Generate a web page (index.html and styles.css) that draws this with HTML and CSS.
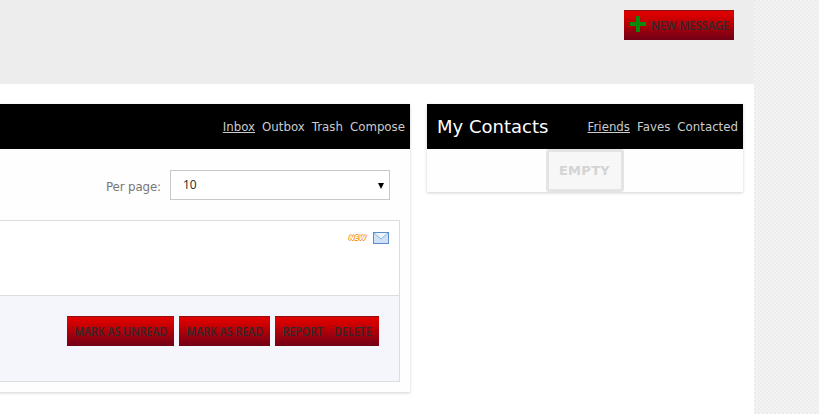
FILE: index.html
```html
<!DOCTYPE html>
<html lang="en">
<head>
  <meta charset="UTF-8" />
  <meta name="viewport" content="width=device-width, initial-scale=1.0" />
  <title>Messages</title>
  <link rel="stylesheet" href="styles.css">
</head>
<body>
  <div class="wrapper">
    <div class="topbar">
      <a class="red-btn new-msg" href="#">
        <svg class="plus" width="16" height="16" viewBox="0 0 16 16"><path d="M6 0h4v6h6v4h-6v6H6v-6H0V6h6z" fill="#0a8a0a"/></svg>
        <span class="lbl">NEW MESSAGE</span>
      </a>
    </div>
    <div class="content">
      <div class="panel messages">
        <div class="panel-head">
          <div class="tabs">
            <a class="active" href="#">Inbox</a>
            <a href="#">Outbox</a>
            <a href="#">Trash</a>
            <a href="#">Compose</a>
          </div>
        </div>
        <div class="panel-body">
          <div class="per-page">
            <label for="perpage">Per page:</label>
            <div class="select-wrap">
              <select id="perpage"><option>10</option><option>20</option></select>
            </div>
          </div>
          <div class="msg-box">
            <div class="msg-top">
              <span class="new-badge">NEW</span>
              <svg class="envelope" width="16" height="12" viewBox="0 0 16 12">
                <rect x="0.5" y="0.5" width="15" height="11" fill="#cfe0f7" stroke="#5b8ccb"/>
                <path d="M1 1l7 6 7-6" fill="#eef4fd" stroke="#8fb2e0"/>
              </svg>
            </div>
            <div class="msg-foot">
              <a class="red-btn unread" href="#"><span class="lbl">MARK AS UNREAD</span></a>
              <a class="red-btn read" href="#"><span class="lbl">MARK AS READ</span></a>
              <div class="red-btn pair"><a class="lbl" href="#">REPORT</a><a class="lbl" href="#">DELETE</a></div>
            </div>
          </div>
        </div>
      </div>
      <div class="panel contacts">
        <div class="panel-head">
          <h2>My Contacts</h2>
          <div class="tabs">
            <a class="active" href="#">Friends</a>
            <a href="#">Faves</a>
            <a href="#">Contacted</a>
          </div>
        </div>
        <div class="contacts-body">
          <div class="empty">EMPTY</div>
        </div>
      </div>
    </div>
  </div>
</body>
</html>
```

FILE: styles.css
```css
html, body {
  height: 100%;
}
body {
  margin: 0;
  overflow: hidden;
  font-family: "DejaVu Sans", Verdana, sans-serif;
  font-size: 11.8px;
  color: #777;
  background-color: #eeeeee;
  background-image:
    radial-gradient(circle at 1px 1px, #f3f3f3 1px, transparent 1px),
    radial-gradient(circle at 3px 3px, #f3f3f3 1px, transparent 1px),
    radial-gradient(circle at 3px 1px, #e9e9e9 0.6px, transparent 0.8px);
  background-size: 4px 4px;
}
a {
  color: inherit;
  text-decoration: none;
}
.wrapper {
  width: 754px;
  height: 100%;
  background: #fff;
}
.topbar {
  height: 74px;
  padding: 10px 20px 0 0;
  background: #ededed;
  display: flex;
  justify-content: flex-end;
  align-items: flex-start;
}
.red-btn {
  height: 30px;
  box-sizing: border-box;
  display: flex;
  align-items: center;
  justify-content: center;
  padding-bottom: 2px;
  border-top: 1px solid #8f1010;
  background: linear-gradient(#e00000, #d80000 15%, #700016);
  color: #33292d;
  font-family: "Open Sans", sans-serif;
  font-size: 13px;
  font-weight: 600;
  white-space: nowrap;
}
.lbl {
  flex: none;
  display: block;
  transform: scaleX(0.82);
}
.new-msg {
  width: 110px;
  justify-content: flex-start;
  padding-left: 6px;
  gap: 5px;
}
.new-msg .lbl {
  transform: scaleX(0.85);
  transform-origin: left center;
}
.plus {
  flex: none;
  margin-top: -1px;
}
.unread {
  width: 107px;
}
.read {
  width: 91px;
}
.pair {
  width: 104px;
  gap: 3px;
}
.content {
  display: flex;
  gap: 17px;
  padding-top: 20px;
}
.panel {
  box-shadow: 0 1px 3px rgba(0, 0, 0, 0.18);
}
.messages {
  width: 500px;
  margin-left: -90px;
}
.contacts {
  width: 316px;
  align-self: flex-start;
}
.panel-head {
  height: 45px;
  background: #000;
  display: flex;
  align-items: center;
  justify-content: space-between;
  padding: 0 5px 0 10px;
  color: #ccc;
}
.messages .panel-head {
  justify-content: flex-end;
}
.panel-head h2 {
  margin: 0;
  color: #fff;
  font-size: 18px;
  font-weight: normal;
}
.tabs {
  display: flex;
  gap: 7px;
}
.tabs .active {
  text-decoration: underline;
}
.panel-body {
  height: 243px;
  box-sizing: border-box;
  padding: 21px 10px 0 0;
  background: #fefefe;
}
.per-page {
  display: flex;
  justify-content: flex-end;
  align-items: center;
  gap: 9px;
  padding-right: 10px;
  margin-bottom: 20px;
}
.per-page label {
  margin-top: 4px;
  letter-spacing: -0.1px;
}
.select-wrap {
  position: relative;
}
.select-wrap::after {
  content: "";
  position: absolute;
  right: 6px;
  top: 13px;
  border-left: 3px solid transparent;
  border-right: 3px solid transparent;
  border-top: 6px solid #000;
}
.per-page select {
  appearance: none;
  display: block;
  width: 220px;
  height: 30px;
  padding: 0 12px 2px;
  border: 1px solid #c8c8c8;
  border-radius: 0;
  background: #fff;
  color: #333;
  font-family: "Noto Sans", sans-serif;
  font-size: 12px;
}
.msg-box {
  border: 1px solid #dcdde0;
  height: 162px;
  box-sizing: border-box;
  display: flex;
  flex-direction: column;
}
.msg-top {
  height: 74px;
  box-sizing: border-box;
  padding: 11px 10px 0 0;
  background: #fff;
  display: flex;
  justify-content: flex-end;
  align-items: flex-start;
  gap: 7px;
}
.new-badge {
  margin-top: 3px;
  color: #fff;
  font-family: "DejaVu Sans", sans-serif;
  font-size: 6.5px;
  font-weight: bold;
  font-style: italic;
  line-height: 7px;
  text-shadow: 1px 0 0 #f7931e, -1px 0 0 #f7931e, 0 1px 0 #f7931e, 0 -1px 0 #f7931e;
}
.envelope {
  display: block;
}
.msg-foot {
  flex: 1;
  border-top: 1px solid #dcdde0;
  background: #f5f6fb;
  padding: 20px 20px 0 0;
  display: flex;
  justify-content: flex-end;
  align-items: flex-start;
  gap: 5px;
}
.contacts-body {
  height: 43px;
  background: #fefefe;
  display: flex;
  justify-content: center;
}
.empty {
  width: 78px;
  box-sizing: border-box;
  margin-left: -1px;
  border: 3px solid #e4e4e4;
  border-radius: 3px;
  background: #f7f7f7;
  color: #d4d4d4;
  font-size: 13px;
  font-weight: bold;
  letter-spacing: 0.3px;
  display: flex;
  align-items: center;
  justify-content: center;
}
```
